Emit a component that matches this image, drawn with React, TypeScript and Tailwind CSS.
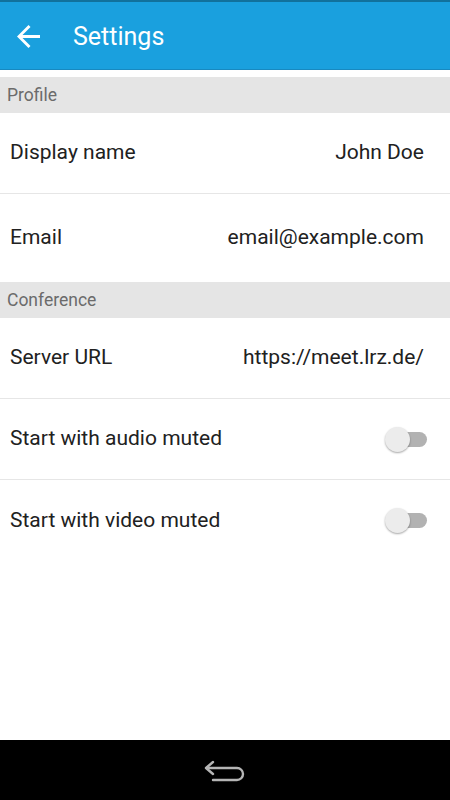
import React from "react";

function Toggle() {
  return (
    <div className="relative w-[44px] h-[26px] flex items-center">
      <div className="absolute left-[6px] w-[36px] h-[15px] rounded-full bg-[#b2b2b2]" />
      <div className="absolute left-0 w-[25px] h-[25px] rounded-full bg-[#ececec] shadow-[0_1px_2px_rgba(0,0,0,0.35)]" />
    </div>
  );
}

function Row({ label, value, toggle, border = true, h = "h-[81px]" }: { label: string; value?: string; toggle?: boolean; border?: boolean; h?: string }) {
  return (
    <div className={`${h} flex items-center justify-between pl-[10px] pr-[26px] ${border ? "border-b border-[#e6e6e6]" : ""}`}>
      <span className="text-[21px] text-[#212121]">{label}</span>
      {toggle ? (
        <div className="-mr-[5px]"><Toggle /></div>
      ) : (
        <span className="text-[21px] text-[#212121]">{value}</span>
      )}
    </div>
  );
}

function SectionHeader({ title }: { title: string }) {
  return (
    <div className="h-[36px] bg-[#e5e5e5] flex items-center pl-[7px]">
      <span className="text-[17.5px] text-[#6b6b6b]">{title}</span>
    </div>
  );
}

export default function App() {
  return (
    <div className="w-[450px] h-[800px] flex flex-col bg-white" style={{ fontFamily: "Roboto, 'Noto Sans', sans-serif" }}>
      <div className="h-[2px] bg-[#11719c]" />
      <div className="h-[68px] bg-[#1aa0de] flex items-center border-b border-[#1889c0]">
        <svg width="23" height="23" viewBox="4 4 16 16" className="ml-[17px] mt-[2px]">
          <path d="M20 11H7.83l5.59-5.59L12 4l-8 8 8 8 1.41-1.41L7.83 13H20v-2z" fill="#ffffff" />
        </svg>
        <span className="ml-[33px] text-[25px] text-white mt-[2px]">Settings</span>
      </div>
      <div className="h-[7px]" />
      <SectionHeader title="Profile" />
      <Row label="Display name" value="John Doe" />
      <Row label="Email" value="email@example.com" border={false} h="h-[88px]" />
      <SectionHeader title="Conference" />
      <Row label="Server URL" value="https://meet.lrz.de/" />
      <Row label="Start with audio muted" toggle />
      <Row label="Start with video muted" toggle border={false} />
      <div className="flex-1" />
      <div className="h-[60px] bg-black flex items-center justify-center">
        <svg width="44" height="26" viewBox="0 0 44 26" className="mt-[2px]">
          <path d="M10 4 L3 10 L10 16" fill="none" stroke="#b5b5b5" strokeWidth="2.4" strokeLinecap="round" strokeLinejoin="round" />
          <path d="M3.5 10 H34 a6 6 0 0 1 0 12 H10" fill="none" stroke="#b5b5b5" strokeWidth="2.4" strokeLinecap="round" />
        </svg>
      </div>
    </div>
  );
}
